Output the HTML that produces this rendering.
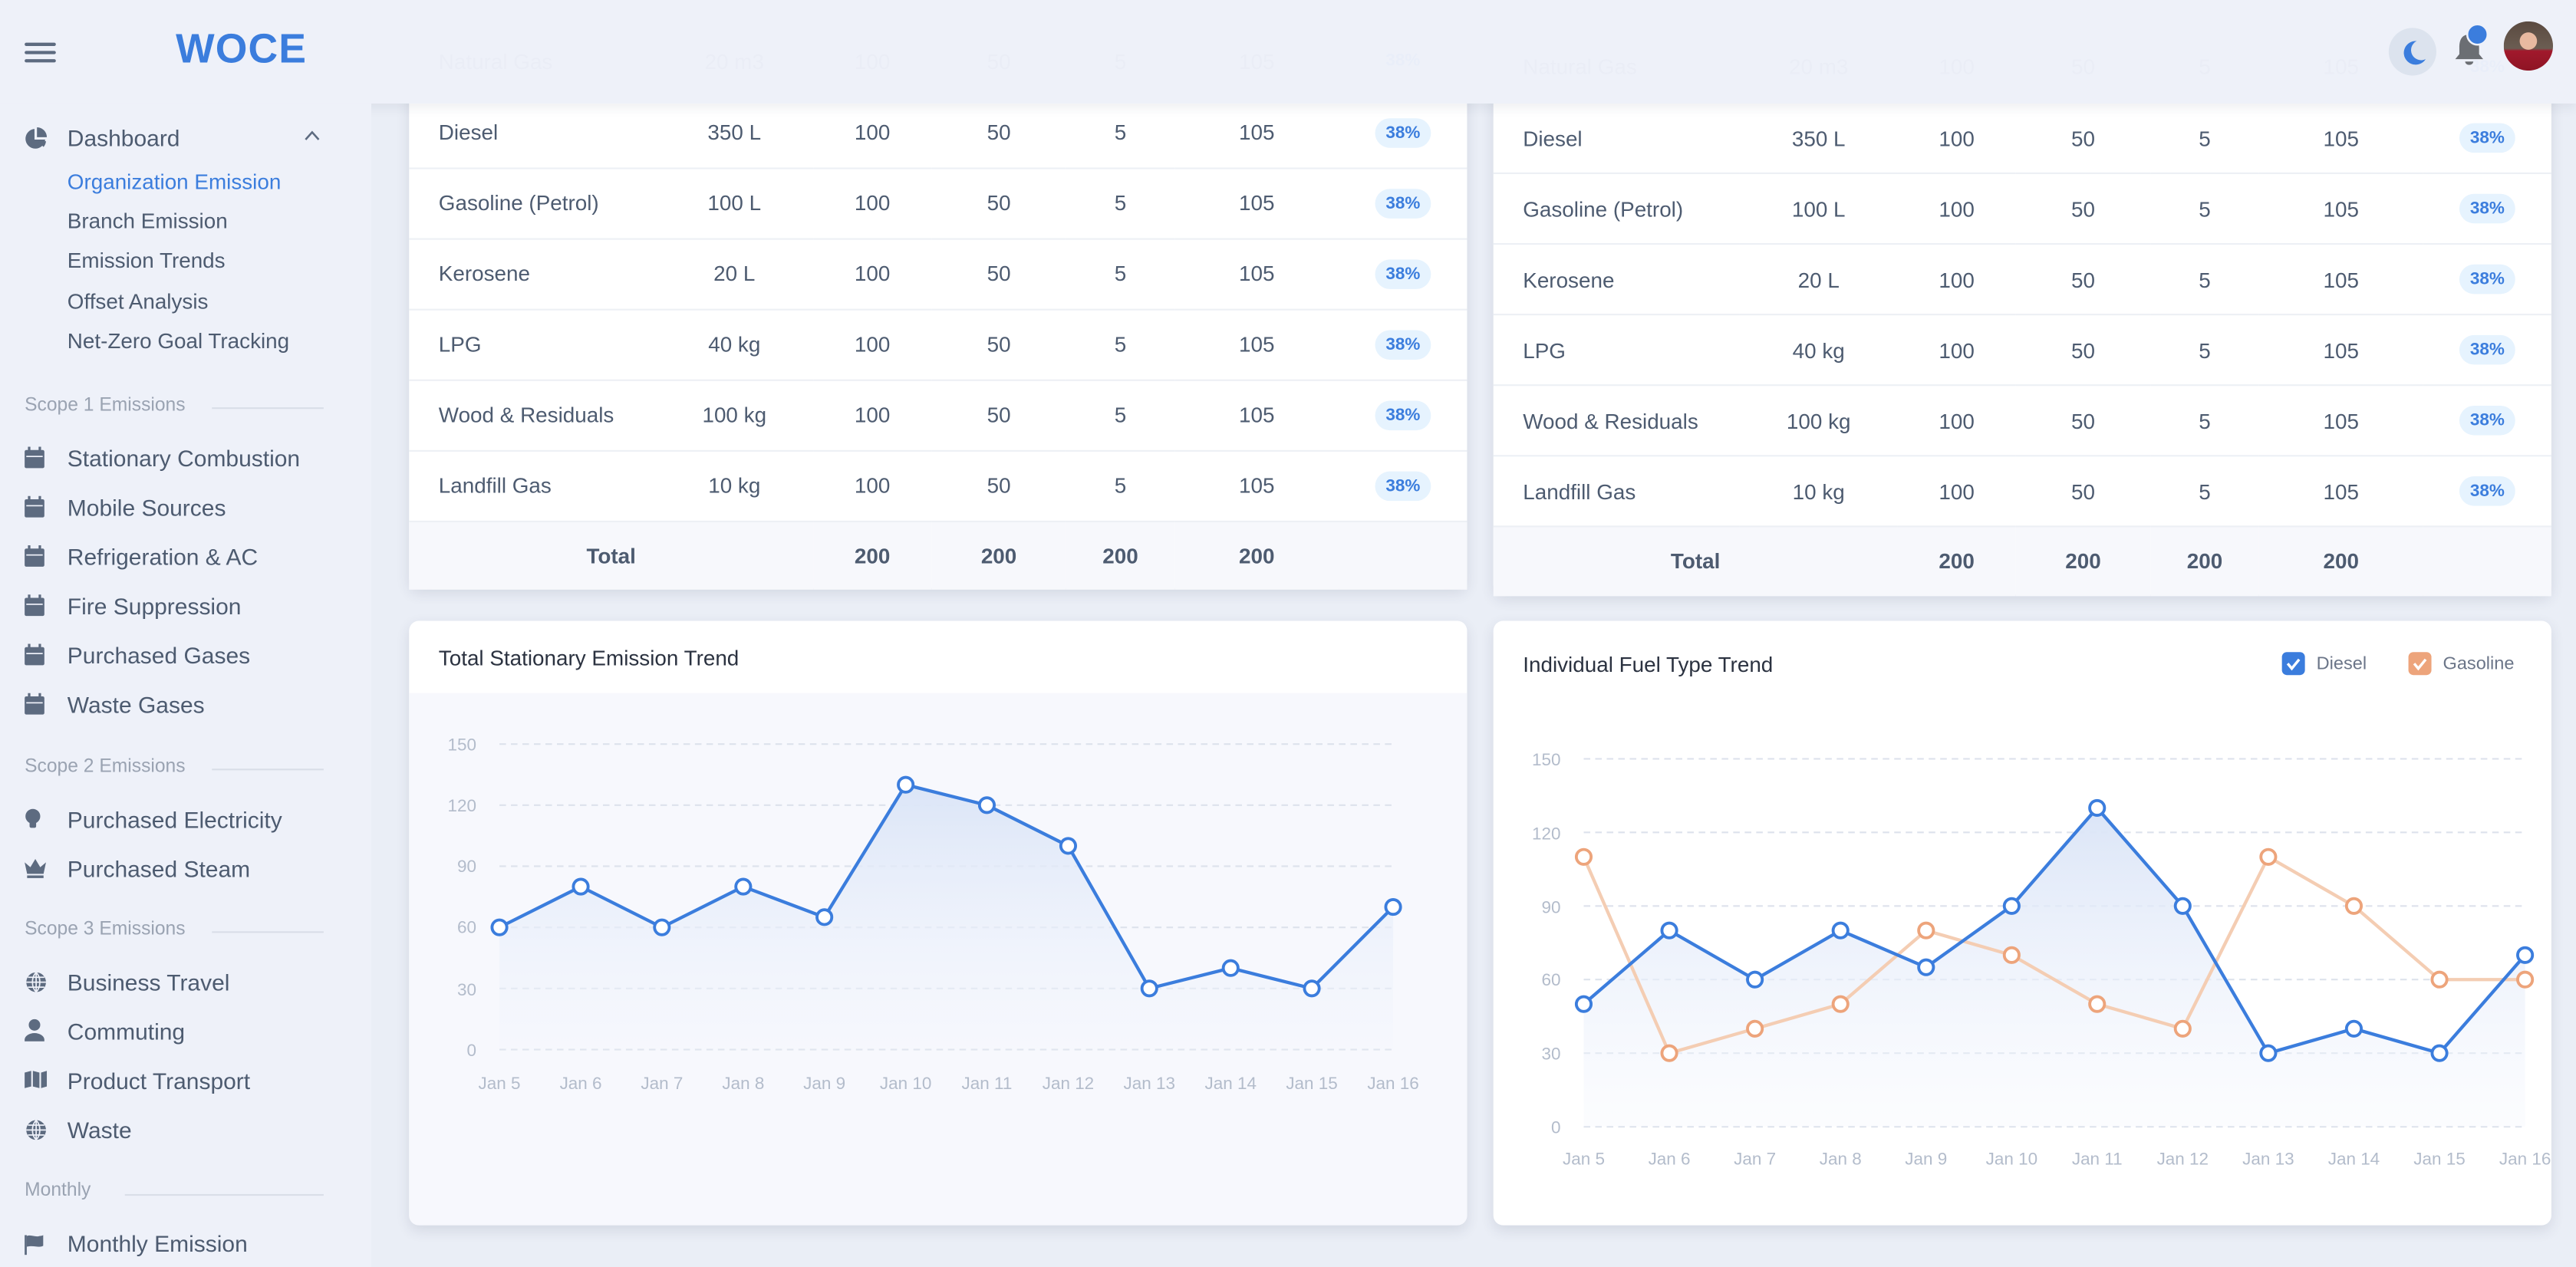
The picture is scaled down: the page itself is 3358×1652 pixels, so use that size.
<!DOCTYPE html>
<html><head><meta charset="utf-8"><style>
*{box-sizing:border-box;margin:0;padding:0}
html,body{width:3358px;height:1652px;overflow:hidden;background:#eaeef6}
#w{position:absolute;left:0;top:0;width:1568px;height:771.5px;transform:scale(2.14158);transform-origin:0 0;font-family:"Liberation Sans",sans-serif;background:#eaeef6;overflow:hidden}
.side{position:absolute;left:0;top:0;width:226px;height:772px;background:#eef1f9}
.si{position:absolute;left:41px;font-size:14px;color:#4d5b70;white-space:nowrap}
.sub{position:absolute;left:41px;font-size:13px;color:#4d5b70}
.sec{position:absolute;left:15px;font-size:11.5px;color:#9aa3b2}
.ic{position:absolute;left:15px;width:14px;height:14px}
.card{position:absolute;background:#fff;border-radius:6px;box-shadow:0 3px 8px rgba(50,60,90,.12)}
table{position:absolute;border-collapse:collapse;font-size:13px;color:#4d5b70;width:644px}
td{height:43px;text-align:center;border-bottom:1px solid #edf0f5;padding:0}
td:first-child{text-align:left;padding-left:18px}
.b{display:inline-block;background:#e6f3fe;color:#3b7ddd;font-size:10.5px;font-weight:bold;border-radius:9px;padding:3px 6px}
tr.t td{background:#f7f8fc;font-weight:bold;border:none;height:42px}
.hdr{position:absolute;left:0;top:0;width:1568px;height:63px;background:rgba(238,241,249,.975);box-shadow:0 3px 6px rgba(40,50,80,.07)}
.ttl{position:absolute;font-size:13px;color:#2b3240}
</style></head><body><div id="w">

<div class="card" style="left:249px;top:-30px;width:644px;height:388px"></div>
<table style="left:249px;top:16px"><colgroup><col style="width:150px"><col style="width:96px"><col style="width:72px"><col style="width:82px"><col style="width:66px"><col style="width:100px"><col style="width:78px"></colgroup>
<tr><td>Natural Gas</td><td>20 m3</td><td>100</td><td>50</td><td>5</td><td>105</td><td><span class="b">38%</span></td></tr>
<tr><td>Diesel</td><td>350 L</td><td>100</td><td>50</td><td>5</td><td>105</td><td><span class="b">38%</span></td></tr>
<tr><td>Gasoline (Petrol)</td><td>100 L</td><td>100</td><td>50</td><td>5</td><td>105</td><td><span class="b">38%</span></td></tr>
<tr><td>Kerosene</td><td>20 L</td><td>100</td><td>50</td><td>5</td><td>105</td><td><span class="b">38%</span></td></tr>
<tr><td>LPG</td><td>40 kg</td><td>100</td><td>50</td><td>5</td><td>105</td><td><span class="b">38%</span></td></tr>
<tr><td>Wood &amp; Residuals</td><td>100 kg</td><td>100</td><td>50</td><td>5</td><td>105</td><td><span class="b">38%</span></td></tr>
<tr><td>Landfill Gas</td><td>10 kg</td><td>100</td><td>50</td><td>5</td><td>105</td><td><span class="b">38%</span></td></tr>
<tr class="t"><td style="text-align:center;padding:0" colspan="2">Total</td><td>200</td><td>200</td><td>200</td><td>200</td><td></td></tr>
</table>

<div class="card" style="left:909px;top:-30px;width:644px;height:392px"></div>
<table style="left:909px;top:19.5px"><colgroup><col style="width:150px"><col style="width:96px"><col style="width:72px"><col style="width:82px"><col style="width:66px"><col style="width:100px"><col style="width:78px"></colgroup>
<tr><td>Natural Gas</td><td>20 m3</td><td>100</td><td>50</td><td>5</td><td>105</td><td><span class="b">38%</span></td></tr>
<tr><td>Diesel</td><td>350 L</td><td>100</td><td>50</td><td>5</td><td>105</td><td><span class="b">38%</span></td></tr>
<tr><td>Gasoline (Petrol)</td><td>100 L</td><td>100</td><td>50</td><td>5</td><td>105</td><td><span class="b">38%</span></td></tr>
<tr><td>Kerosene</td><td>20 L</td><td>100</td><td>50</td><td>5</td><td>105</td><td><span class="b">38%</span></td></tr>
<tr><td>LPG</td><td>40 kg</td><td>100</td><td>50</td><td>5</td><td>105</td><td><span class="b">38%</span></td></tr>
<tr><td>Wood &amp; Residuals</td><td>100 kg</td><td>100</td><td>50</td><td>5</td><td>105</td><td><span class="b">38%</span></td></tr>
<tr><td>Landfill Gas</td><td>10 kg</td><td>100</td><td>50</td><td>5</td><td>105</td><td><span class="b">38%</span></td></tr>
<tr class="t"><td style="text-align:center;padding:0" colspan="2">Total</td><td>200</td><td>200</td><td>200</td><td>200</td><td></td></tr>
</table>

<div class="card" style="left:249px;top:378px;width:644px;height:368px;overflow:hidden"><div style="position:absolute;left:0;top:44px;width:644px;height:324px;background:#f7f8fd"></div></div>
<div class="ttl" style="left:267px;top:393px">Total Stationary Emission Trend</div>
<div class="card" style="left:909px;top:378px;width:644px;height:368px"></div>
<div class="ttl" style="left:927px;top:397px">Individual Fuel Type Trend</div>

<svg style="position:absolute;left:0;top:0" width="1568" height="772" font-family="Liberation Sans, sans-serif">
<defs>
<linearGradient id="g1" x1="0" y1="0" x2="0" y2="1"><stop offset="0" stop-color="#dbe5f7"/><stop offset="1" stop-color="#f3f6fd" stop-opacity=".3"/></linearGradient>
</defs>
<g stroke="#dde2ec" stroke-dasharray="4 3" stroke-width="1">
<line x1="304" x2="848" y1="453" y2="453"/><line x1="304" x2="848" y1="490.2" y2="490.2"/><line x1="304" x2="848" y1="527.4" y2="527.4"/><line x1="304" x2="848" y1="564.6" y2="564.6"/><line x1="304" x2="848" y1="601.8" y2="601.8"/><line x1="304" x2="848" y1="639" y2="639"/>
<line x1="964" x2="1537" y1="462" y2="462"/><line x1="964" x2="1537" y1="506.8" y2="506.8"/><line x1="964" x2="1537" y1="551.6" y2="551.6"/><line x1="964" x2="1537" y1="596.4" y2="596.4"/><line x1="964" x2="1537" y1="641.2" y2="641.2"/><line x1="964" x2="1537" y1="686" y2="686"/>
</g>
<g fill="#b3bccb" font-size="10.5" text-anchor="end">
<text x="290" y="457">150</text><text x="290" y="494">120</text><text x="290" y="531">90</text><text x="290" y="568">60</text><text x="290" y="606">30</text><text x="290" y="643">0</text>
<text x="950" y="466">150</text><text x="950" y="511">120</text><text x="950" y="556">90</text><text x="950" y="600">60</text><text x="950" y="645">30</text><text x="950" y="690">0</text>
</g>
<g fill="#b3bccb" font-size="10.5" text-anchor="middle">
<text x="304" y="663">Jan 5</text><text x="353.5" y="663">Jan 6</text><text x="402.9" y="663">Jan 7</text><text x="452.4" y="663">Jan 8</text><text x="501.8" y="663">Jan 9</text><text x="551.3" y="663">Jan 10</text><text x="600.7" y="663">Jan 11</text><text x="650.2" y="663">Jan 12</text><text x="699.6" y="663">Jan 13</text><text x="749.1" y="663">Jan 14</text><text x="798.5" y="663">Jan 15</text><text x="848" y="663">Jan 16</text>
<text x="964" y="709">Jan 5</text><text x="1016.1" y="709">Jan 6</text><text x="1068.2" y="709">Jan 7</text><text x="1120.3" y="709">Jan 8</text><text x="1172.4" y="709">Jan 9</text><text x="1224.5" y="709">Jan 10</text><text x="1276.5" y="709">Jan 11</text><text x="1328.6" y="709">Jan 12</text><text x="1380.7" y="709">Jan 13</text><text x="1432.8" y="709">Jan 14</text><text x="1484.9" y="709">Jan 15</text><text x="1537" y="709">Jan 16</text>
</g>
<path d="M304,564.6 L353.5,539.8 L402.9,564.6 L452.4,539.8 L501.8,558.4 L551.3,477.8 L600.7,490.2 L650.2,515 L699.6,601.8 L749.1,589.4 L798.5,601.8 L848,552.2 L848,639 L304,639Z" fill="url(#g1)"/>
<polyline points="304,564.6 353.5,539.8 402.9,564.6 452.4,539.8 501.8,558.4 551.3,477.8 600.7,490.2 650.2,515 699.6,601.8 749.1,589.4 798.5,601.8 848,552.2" fill="none" stroke="#3b7ddd" stroke-width="2"/>
<g fill="#fff" stroke="#3b7ddd" stroke-width="1.8">
<circle cx="304" cy="564.6" r="4.5"/><circle cx="353.5" cy="539.8" r="4.5"/><circle cx="402.9" cy="564.6" r="4.5"/><circle cx="452.4" cy="539.8" r="4.5"/><circle cx="501.8" cy="558.4" r="4.5"/><circle cx="551.3" cy="477.8" r="4.5"/><circle cx="600.7" cy="490.2" r="4.5"/><circle cx="650.2" cy="515" r="4.5"/><circle cx="699.6" cy="601.8" r="4.5"/><circle cx="749.1" cy="589.4" r="4.5"/><circle cx="798.5" cy="601.8" r="4.5"/><circle cx="848" cy="552.2" r="4.5"/>
</g>
<path d="M964,611.3 L1016.1,566.5 L1068.2,596.4 L1120.3,566.5 L1172.4,588.9 L1224.5,551.6 L1276.5,491.9 L1328.6,551.6 L1380.7,641.2 L1432.8,626.3 L1484.9,641.2 L1537,581.5 L1537,686 L964,686Z" fill="url(#g1)"/>
<polyline points="964,521.7 1016.1,641.2 1068.2,626.3 1120.3,611.3 1172.4,566.5 1224.5,581.5 1276.5,611.3 1328.6,626.3 1380.7,521.7 1432.8,551.6 1484.9,596.4 1537,596.4" fill="none" stroke="#f4cdb3" stroke-width="2"/>
<g fill="#fff" stroke="#eda47b" stroke-width="1.8">
<circle cx="964" cy="521.7" r="4.5"/><circle cx="1016.1" cy="641.2" r="4.5"/><circle cx="1068.2" cy="626.3" r="4.5"/><circle cx="1120.3" cy="611.3" r="4.5"/><circle cx="1172.4" cy="566.5" r="4.5"/><circle cx="1224.5" cy="581.5" r="4.5"/><circle cx="1276.5" cy="611.3" r="4.5"/><circle cx="1328.6" cy="626.3" r="4.5"/><circle cx="1380.7" cy="521.7" r="4.5"/><circle cx="1432.8" cy="551.6" r="4.5"/><circle cx="1484.9" cy="596.4" r="4.5"/><circle cx="1537" cy="596.4" r="4.5"/>
</g>
<polyline points="964,611.3 1016.1,566.5 1068.2,596.4 1120.3,566.5 1172.4,588.9 1224.5,551.6 1276.5,491.9 1328.6,551.6 1380.7,641.2 1432.8,626.3 1484.9,641.2 1537,581.5" fill="none" stroke="#3b7ddd" stroke-width="2"/>
<g fill="#fff" stroke="#3b7ddd" stroke-width="1.8">
<circle cx="964" cy="611.3" r="4.5"/><circle cx="1016.1" cy="566.5" r="4.5"/><circle cx="1068.2" cy="596.4" r="4.5"/><circle cx="1120.3" cy="566.5" r="4.5"/><circle cx="1172.4" cy="588.9" r="4.5"/><circle cx="1224.5" cy="551.6" r="4.5"/><circle cx="1276.5" cy="491.9" r="4.5"/><circle cx="1328.6" cy="551.6" r="4.5"/><circle cx="1380.7" cy="641.2" r="4.5"/><circle cx="1432.8" cy="626.3" r="4.5"/><circle cx="1484.9" cy="641.2" r="4.5"/><circle cx="1537" cy="581.5" r="4.5"/>
</g>
<rect x="1389" y="397" width="14" height="14" rx="3" fill="#3b7ddd"/><path d="M1392.5,404 l2.5,3 l4.5,-5.5" stroke="#fff" stroke-width="1.6" fill="none"/>
<text x="1410" y="407.5" font-size="11" fill="#6b7588">Diesel</text>
<rect x="1466" y="397" width="14" height="14" rx="3" fill="#eda47b"/><path d="M1469.5,404 l2.5,3 l4.5,-5.5" stroke="#fff" stroke-width="1.6" fill="none"/>
<text x="1487" y="407.5" font-size="11" fill="#6b7588">Gasoline</text>
</svg>

<div class="hdr"></div>
<div style="position:absolute;left:15px;top:26px;width:19px;height:2px;background:#5d6b80;border-radius:1px;box-shadow:0 5px 0 #5d6b80,0 10px 0 #5d6b80"></div>
<div style="position:absolute;left:107px;top:16px;font-size:25px;font-weight:900;color:#3b7ddd;letter-spacing:0.5px">WOCE</div>
<div style="position:absolute;left:1454px;top:17px;width:29px;height:29px;border-radius:50%;background:#dce3ee"></div>
<svg style="position:absolute;left:1460px;top:23px" width="18" height="18"><path d="M11,2 A7.2,7.2 0 1 0 16.5,13 A6,6 0 0 1 11,2Z" fill="#3b7ddd"/></svg>
<svg style="position:absolute;left:1492px;top:14px" width="24" height="28"><path d="M11,7 C6,7 5,11 5,15 L5,19 L2.5,22 L19.5,22 L17,19 L17,15 C17,11 16,7 11,7Z" fill="#6b6e73"/><path d="M8.5,23.5 h5 a2.5,2 0 0 1 -5,0Z" fill="#6b6e73"/><circle cx="16" cy="7" r="6.2" fill="#3b7ddd" stroke="#eef1f9" stroke-width="1.2"/></svg>
<div style="position:absolute;left:1524px;top:13px;width:30px;height:30px;border-radius:50%;overflow:hidden;background:radial-gradient(circle at 50% 40%,#e8b9a0 0 22%,transparent 23%),linear-gradient(#5a4a40 0,#6b5d52 55%,#a1192c 60%,#8e1424 100%)"></div>

<div class="side" style="top:63px;height:709px"></div>
<svg class="ic" style="top:77px" viewBox="0 0 14 14"><path d="M6,1.5 A6,6 0 1 0 12.5,8 L6,8Z" fill="#5d6b80"/><path d="M7.5,0.5 A6,6 0 0 1 13.5,6.5 L7.5,6.5Z" fill="#5d6b80"/><path d="M8,9 L13,9 A6,6 0 0 1 11.5,12.5Z" fill="#5d6b80"/></svg>
<div class="si" style="top:76px">Dashboard</div>
<svg style="position:absolute;left:185px;top:79px" width="10" height="7"><path d="M1,6 L5,1.5 L9,6" stroke="#5d6b80" stroke-width="1.2" fill="none"/></svg>
<div class="sub" style="top:103px;color:#3b7ddd">Organization Emission</div>
<div class="sub" style="top:127px">Branch Emission</div>
<div class="sub" style="top:151px">Emission Trends</div>
<div class="sub" style="top:176px">Offset Analysis</div>
<div class="sub" style="top:200px">Net-Zero Goal Tracking</div>

<div class="sec" style="top:241px">Scope 1 Emissions</div><div style="position:absolute;left:129px;top:248px;width:68px;height:1px;background:#d9dee8"></div>
<div class="si" style="top:271px">Stationary Combustion</div>
<div class="si" style="top:301px">Mobile Sources</div>
<div class="si" style="top:331px">Refrigeration &amp; AC</div>
<div class="si" style="top:361px">Fire Suppression</div>
<div class="si" style="top:391px">Purchased Gases</div>
<div class="si" style="top:421px">Waste Gases</div>
<div class="sec" style="top:461px">Scope 2 Emissions</div><div style="position:absolute;left:129px;top:468px;width:68px;height:1px;background:#d9dee8"></div>
<div class="si" style="top:491px">Purchased Electricity</div>
<div class="si" style="top:521px">Purchased Steam</div>
<div class="sec" style="top:560px">Scope 3 Emissions</div><div style="position:absolute;left:129px;top:567px;width:68px;height:1px;background:#d9dee8"></div>
<div class="si" style="top:590px">Business Travel</div>
<div class="si" style="top:620px">Commuting</div>
<div class="si" style="top:650px">Product Transport</div>
<div class="si" style="top:680px">Waste</div>
<div class="sec" style="top:719px">Monthly</div><div style="position:absolute;left:76px;top:727px;width:121px;height:1px;background:#d9dee8"></div>
<div class="si" style="top:749px">Monthly Emission</div>

<svg style="position:absolute;left:0;top:0" width="226" height="772">
<g fill="#5d6b80">
<g id="cal"><rect x="15" y="274" width="12" height="11" rx="1"/><rect x="17" y="272" width="1.5" height="3"/><rect x="23.5" y="272" width="1.5" height="3"/><rect x="16" y="277.5" width="10" height="0.8" fill="#eef1f9"/></g>
<use href="#cal" y="30"/><use href="#cal" y="60"/><use href="#cal" y="90"/><use href="#cal" y="120"/><use href="#cal" y="150"/>
<circle cx="20" cy="497" r="4.5"/><rect x="18" y="500" width="4" height="4" rx="1"/>
<path d="M15,525 L18.5,528 L21.5,523 L24.5,528 L28,525 L26.5,532 L16.5,532Z"/><rect x="16.5" y="533" width="10" height="1.6"/>
<g id="gl"><circle cx="22" cy="598" r="6"/><path d="M16,598 h12 M22,592 v12 M22,592 c-3,3 -3,9 0,12 M22,592 c3,3 3,9 0,12 M17,595 h10 M17,601 h10" stroke="#eef1f9" stroke-width="0.8" fill="none"/></g>
<use href="#gl" y="90"/>
<circle cx="21" cy="624" r="3.5"/><path d="M15,633 a6,4 0 0 1 12,0 v1 h-12Z"/>
<path d="M15,653 l4,-1 v9.5 l-4,1Z M20,652 l4,1 v9.5 l-4,-1Z M25,653 l3.5,-1 v9.5 l-3.5,1Z"/>
<rect x="15" y="752" width="1.3" height="12"/><path d="M16.3,752.5 c3,-1 5,1 8,0 c1,0 2,-0.5 2,-0.5 v6.5 c-3,1.5 -5,-0.5 -10,0.5Z"/>
</g>
</svg>
</div></body></html>
